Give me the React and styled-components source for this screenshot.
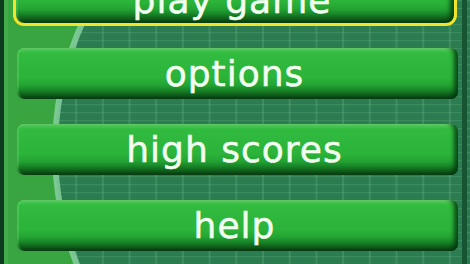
import React from "react";
import styled, { createGlobalStyle, css } from "styled-components";

const GlobalStyle = createGlobalStyle`
  html, body {
    margin: 0;
    padding: 0;
    width: 470px;
    height: 264px;
    overflow: hidden;
    background: #38a540;
  }
`;

const Screen = styled.div`
  position: relative;
  width: 470px;
  height: 264px;
  overflow: hidden;
  font-family: "DejaVu Sans", "Verdana", sans-serif;
`;

const Field = styled.svg`
  position: absolute;
  inset: 0;
  z-index: 0;
  display: block;
`;

const Menu = styled.nav`
  position: relative;
  z-index: 1;
  display: flex;
  flex-direction: column;
  gap: 25px;
  margin-top: -28px;
`;

const MenuButton = styled.div`
  box-sizing: border-box;
  height: 51px;
  margin-left: 17px;
  width: 441px;
  padding-right: 6px;
  border-radius: 7px;
  display: flex;
  align-items: center;
  justify-content: center;
  background: linear-gradient(
    to bottom,
    #74de76 0px,
    #48c854 2px,
    #31bb3f 5px,
    #2bb33a 30px,
    #24a433 37px,
    #188628 42px,
    #0e5c19 47px,
    #073810 51px
  );
  box-shadow: inset -6px 0 4px -2px rgba(0, 50, 12, 0.8),
    inset 2px 0 1px rgba(140, 235, 140, 0.25);
  ${(p) =>
    p.$selected &&
    css`
      margin-left: 16px;
      width: 438px;
      padding-top: 6px;
      outline: 3px solid #f1e52c;
      outline-offset: 0;
      border-radius: 8px;
    `}
`;

const Label = styled.span`
  font-size: 36px;
  line-height: 51px;
  letter-spacing: 1px;
  color: #f2fff0;
  -webkit-text-stroke: 0.5px #f2fff0;
  white-space: nowrap;
`;

const items = [
  { label: "play game", selected: true },
  { label: "options" },
  { label: "high scores" },
  { label: "help" },
];

function PitchBackground() {
  return (
    <Field width="470" height="264" viewBox="0 0 470 264">
      <defs>
        <pattern
          id="grid"
          x="-5"
          y="0"
          width="26.7"
          height="8"
          patternUnits="userSpaceOnUse"
        >
          <rect x="0" y="0" width="2" height="8" fill="#5aa77c" opacity="0.4" />
          <rect x="0" y="0" width="26.7" height="1.2" fill="#5aa77c" opacity="0.35" />
        </pattern>
      </defs>
      <rect x="0" y="0" width="470" height="264" fill="#38a540" />
      <rect x="4" y="0" width="4" height="264" fill="#42ad4a" />
      <circle cx="366" cy="150" r="311" fill="#2b7c50" />
      <circle cx="366" cy="150" r="311" fill="url(#grid)" />
      <circle
        cx="366"
        cy="150"
        r="311"
        fill="none"
        stroke="#86cfa0"
        strokeWidth="6"
        opacity="0.85"
      />
      <rect x="0" y="0" width="4" height="264" fill="#0c3b1e" />
      <rect x="462" y="0" width="5" height="264" fill="#165434" />
    </Field>
  );
}

export default function App() {
  return (
    <>
      <GlobalStyle />
      <Screen>
        <PitchBackground />
        <Menu>
          {items.map((it) => (
            <MenuButton key={it.label} $selected={it.selected}>
              <Label>{it.label}</Label>
            </MenuButton>
          ))}
        </Menu>
      </Screen>
    </>
  );
}
